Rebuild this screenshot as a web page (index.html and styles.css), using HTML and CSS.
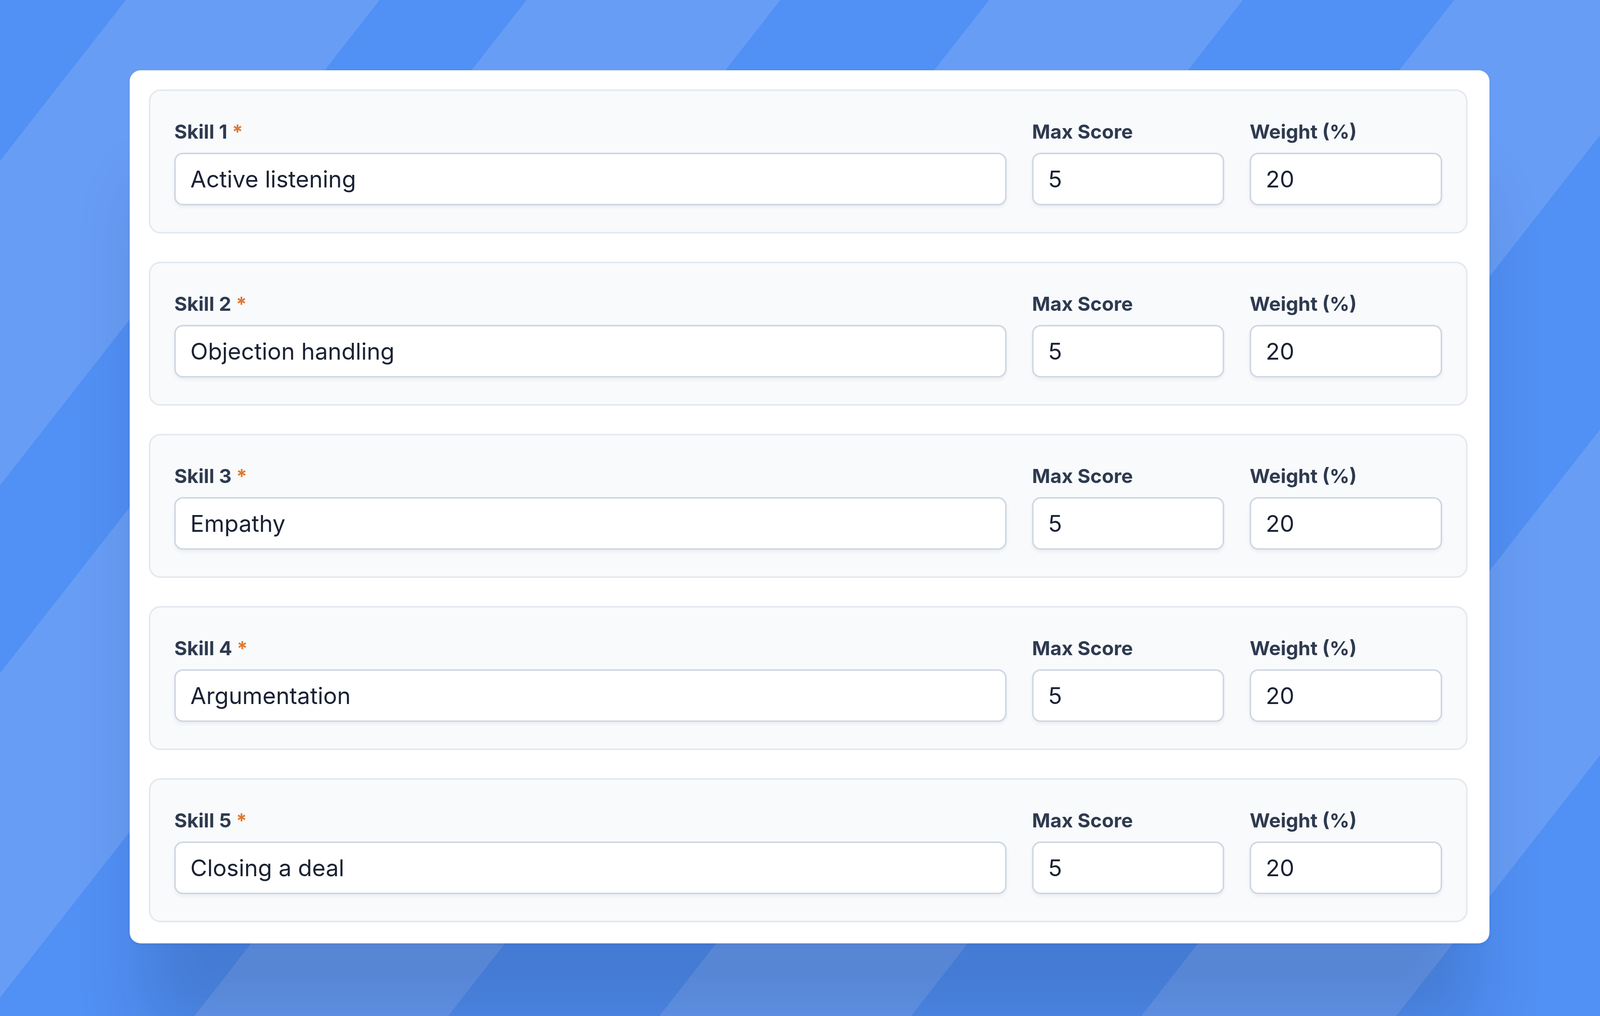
FILE: index.html
```html
<!DOCTYPE html>
<html lang="en">
<head>
    <meta charset="UTF-8">
    <meta name="viewport" content="width=device-width, initial-scale=1.0">
    <title>Skills</title>
    <link rel="stylesheet" href="styles.css">
</head>
<body>

<div class="page">
    <svg class="backdrop" viewBox="0 0 4552 2602" preserveAspectRatio="none" aria-hidden="true">
        <rect width="4552" height="2602" fill="#5190f4"/>
        <g fill="#689df5">
            <polygon points="358,0 1080,0 -1181,2602 -1903,2602"/>
            <polygon points="1498,0 2220,0 -41,2602 -763,2602"/>
            <polygon points="2814,0 3536,0 1275,2602 553,2602"/>
            <polygon points="4137,0 4853,0 2592,2602 1876,2602"/>
            <polygon points="5508,0 6233,0 3972,2602 3247,2602"/>
        </g>
    </svg>

    <div class="card">
        <div class="skill">
            <div class="field">
                <label for="skill1">Skill 1 <span class="req">*</span></label>
                <input type="text" id="skill1" value="Active listening">
            </div>
            <div class="field">
                <label for="max1">Max Score</label>
                <input type="text" id="max1" value="5">
            </div>
            <div class="field">
                <label for="weight1">Weight (%)</label>
                <input type="text" id="weight1" value="20">
            </div>
        </div>
        <div class="skill">
            <div class="field">
                <label for="skill2">Skill 2 <span class="req">*</span></label>
                <input type="text" id="skill2" value="Objection handling">
            </div>
            <div class="field">
                <label for="max2">Max Score</label>
                <input type="text" id="max2" value="5">
            </div>
            <div class="field">
                <label for="weight2">Weight (%)</label>
                <input type="text" id="weight2" value="20">
            </div>
        </div>
        <div class="skill">
            <div class="field">
                <label for="skill3">Skill 3 <span class="req">*</span></label>
                <input type="text" id="skill3" value="Empathy">
            </div>
            <div class="field">
                <label for="max3">Max Score</label>
                <input type="text" id="max3" value="5">
            </div>
            <div class="field">
                <label for="weight3">Weight (%)</label>
                <input type="text" id="weight3" value="20">
            </div>
        </div>
        <div class="skill">
            <div class="field">
                <label for="skill4">Skill 4 <span class="req">*</span></label>
                <input type="text" id="skill4" value="Argumentation">
            </div>
            <div class="field">
                <label for="max4">Max Score</label>
                <input type="text" id="max4" value="5">
            </div>
            <div class="field">
                <label for="weight4">Weight (%)</label>
                <input type="text" id="weight4" value="20">
            </div>
        </div>
        <div class="skill">
            <div class="field">
                <label for="skill5">Skill 5 <span class="req">*</span></label>
                <input type="text" id="skill5" value="Closing a deal">
            </div>
            <div class="field">
                <label for="max5">Max Score</label>
                <input type="text" id="max5" value="5">
            </div>
            <div class="field">
                <label for="weight5">Weight (%)</label>
                <input type="text" id="weight5" value="20">
            </div>
        </div>
    </div>
</div>

</body>
</html>
```

FILE: styles.css
```css
body {
    margin: 0;
    font-family: "Inter", "Noto Sans", sans-serif;
}
.page {
    position: relative;
    height: 100vh;
    box-sizing: border-box;
    padding: 180px 6.9% 0 8.1%;
    overflow: hidden;
    background: #5190f4;
}
.backdrop {
    position: absolute;
    top: 0;
    left: 0;
    width: 100%;
    height: 100%;
    z-index: 0;
}
.card {
    position: relative;
    z-index: 1;
    background: #fff;
    border-radius: 28px;
    padding: 49px 1.63% 54px 1.42%;
    display: flex;
    flex-direction: column;
    gap: 72px;
    box-shadow: 0 260px 160px -40px rgba(10, 25, 60, 0.17), 0 4px 10px rgba(10, 25, 60, 0.06);
}
.skill {
    display: grid;
    grid-template-columns: 1fr 15.17% 15.17%;
    column-gap: 2%;
    padding: 68px 1.81%;
    background: #f8fafc;
    border: 4px solid #e4e9f0;
    border-radius: 30px;
}
.field {
    display: flex;
    flex-direction: column;
    gap: 18px;
}
.field label {
    font-size: 50px;
    font-weight: 700;
    line-height: 72px;
    color: #2e3a4f;
}
.req {
    color: #e0782f;
}
.field input {
    width: 100%;
    height: 135px;
    box-sizing: border-box;
    padding: 0 37px;
    border: 4px solid #cfd8e3;
    border-radius: 22px;
    background: #fff;
    font: inherit;
    font-size: 59px;
    color: #1a2233;
    box-shadow: 0 6px 10px rgba(15, 23, 42, 0.05);
    outline: none;
}
```
